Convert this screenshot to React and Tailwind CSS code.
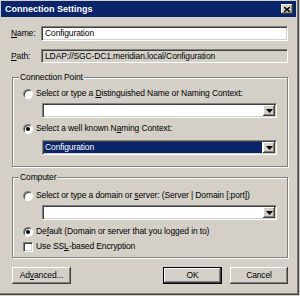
const raised =
  'bg-[#d4d0c8] shadow-[inset_-1px_-1px_#404040,inset_1px_1px_#ffffff,inset_-2px_-2px_#808080]'
const sunken =
  'border border-t-[#808080] border-l-[#808080] border-b-white border-r-white shadow-[inset_1px_1px_#404040,inset_-1px_-1px_#d4d0c8]'

function Radio({ checked }) {
  return (
    <span className="relative flex h-[10px] w-[10px] shrink-0 items-center justify-center rounded-full border border-t-[#808080] border-l-[#808080] border-b-white border-r-white bg-white shadow-[inset_1px_1px_#404040]">
      {checked && <span className="h-[4px] w-[4px] rounded-full bg-black" />}
    </span>
  )
}

function Combo({ value, selected }) {
  return (
    <div className={`ml-[23px] flex h-[15px] w-[235px] items-stretch bg-white ${sunken}`}>
      <div className="flex flex-1 items-center p-[1px]">
        {value && (
          <span
            className={`flex h-full flex-1 items-center pl-[1px] ${
              selected ? 'bg-[#0a246a] text-white' : 'text-black'
            }`}
          >
            {value}
          </span>
        )}
      </div>
      <div className={`my-[1px] mr-[1px] flex w-[12px] items-center justify-center ${raised}`}>
        <svg width="7" height="4" viewBox="0 0 7 4">
          <path d="M0 0h7L3.5 4z" fill="#000" />
        </svg>
      </div>
    </div>
  )
}

function Group({ title, children, className }) {
  return (
    <fieldset
      className={`ml-[11px] w-[276px] border border-[#808080] pl-[6px] shadow-[inset_1px_1px_#ffffff,1px_1px_#ffffff] ${className}`}
    >
      <legend className="bg-[#d4d0c8] px-[1px] leading-[11px]">{title}</legend>
      {children}
    </fieldset>
  )
}

function Button({ children, isDefault, className }) {
  return (
    <div className={`${isDefault ? 'border border-black' : ''} ${className}`}>
      <div className={`flex h-full w-full items-center justify-center ${raised}`}>{children}</div>
    </div>
  )
}

export default function App() {
  return (
    <div
      className="h-[296px] w-[300px] bg-[#d4d0c8] text-[8.5px] leading-[11px] tracking-[-0.12px] text-black"
      style={{ fontFamily: '"Liberation Sans", Arial, sans-serif' }}
    >
      <div className="flex h-[295px] w-[299px] flex-col shadow-[inset_-1px_-1px_#404040,inset_-2px_-2px_#808080] pl-[1px] pt-[1px]">
        {/* title bar */}
        <div className="flex h-[16px] w-[295px] items-center justify-between bg-[#0a246a] pl-[4px] pr-[3px]">
          <span className="text-[9px] font-bold tracking-normal text-white">Connection Settings</span>
          <div className={`flex h-[10px] w-[12px] items-center justify-center ${raised}`}>
            <svg width="6" height="5" viewBox="0 0 6 5">
              <path d="M0 0l6 5M6 0L0 5" stroke="#000" strokeWidth="1.4" />
            </svg>
          </div>
        </div>

        {/* name / path */}
        <div className="mt-[9px] flex h-[15px] items-center">
          <span className="ml-[10px] w-[30px]">
            <u>N</u>ame:
          </span>
          <div className={`flex h-full w-[247px] items-center bg-white pl-[3px] ${sunken}`}>
            Configuration
          </div>
        </div>
        <div className="mt-[8px] flex h-[14px] items-center">
          <span className="ml-[10px] w-[30px]">
            <u>P</u>ath:
          </span>
          <div className={`flex h-full w-[247px] items-center bg-[#d4d0c8] pl-[3px] ${sunken}`}>
            LDAP://SGC-DC1.meridian.local/Configuration
          </div>
        </div>

        <Group title="Connection Point" className="mt-[9px] h-[95px]">
          <div className="mt-[5px] flex items-center gap-[3px] pl-[4px]">
            <Radio />
            <span>
              Select or type a <u>D</u>istinguished Name or Naming Context:
            </span>
          </div>
          <div className="mt-[4px]">
            <Combo />
          </div>
          <div className="mt-[5px] flex items-center gap-[3px] pl-[4px]">
            <Radio checked />
            <span>
              Select a well known N<u>a</u>ming Context:
            </span>
          </div>
          <div className="mt-[6px]">
            <Combo value="Configuration" selected />
          </div>
        </Group>

        <Group title="Computer" className="mt-[5px] h-[86px]">
          <div className="mt-[7px] flex items-center gap-[3px] pl-[4px]">
            <Radio />
            <span>
              Select or type a domain or <u>s</u>erver: (Server | Domain [:port])
            </span>
          </div>
          <div className="mt-[4px]">
            <Combo />
          </div>
          <div className="mt-[6px] flex items-center gap-[3px] pl-[4px]">
            <Radio checked />
            <span>
              De<u>f</u>ault (Domain or server that you logged in to)
            </span>
          </div>
          <div className="mt-[4px] flex items-center gap-[3px] pl-[4px]">
            <span className={`h-[10px] w-[10px] bg-white ${sunken}`} />
            <span>
              Use SS<u>L</u>-based Encryption
            </span>
          </div>
        </Group>

        <div className="mt-[9px] flex h-[17px] items-stretch">
          <Button className="ml-[11px] w-[59px]">
            Ad<u>v</u>anced...
          </Button>
          <Button isDefault className="ml-[92px] w-[59px]">
            OK
          </Button>
          <Button className="ml-[8px] w-[58px]">Cancel</Button>
        </div>
      </div>
    </div>
  )
}
